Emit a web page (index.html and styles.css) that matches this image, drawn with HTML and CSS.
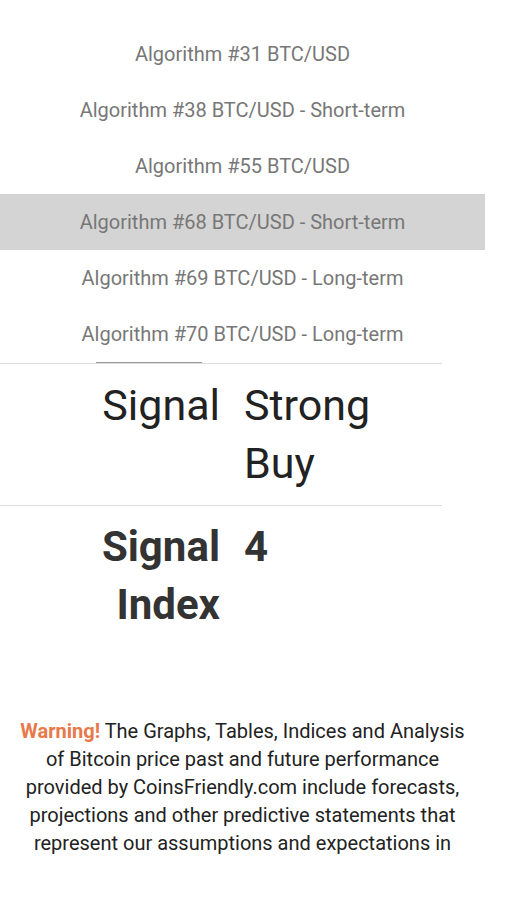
FILE: index.html
```html
<!DOCTYPE html>
<html lang="en">
<head>
    <meta charset="UTF-8">
    <meta name="viewport" content="width=device-width, initial-scale=1.0">
    <title>Signals</title>
    <link rel="stylesheet" href="styles.css">
</head>
<body>
    <div class="algo-list">
        <div class="algo-item">Algorithm #31 BTC/USD</div>
        <div class="algo-item">Algorithm #38 BTC/USD - Short-term</div>
        <div class="algo-item">Algorithm #55 BTC/USD</div>
        <div class="algo-item selected">Algorithm #68 BTC/USD - Short-term</div>
        <div class="algo-item">Algorithm #69 BTC/USD - Long-term</div>
        <div class="algo-item">Algorithm #70 BTC/USD - Long-term</div>
        <div class="scroll-thumb"></div>
    </div>

    <div class="signal-table">
        <div class="signal-row">
            <div class="signal-label">Signal</div>
            <div class="signal-value">Strong Buy</div>
        </div>
        <div class="signal-row bold">
            <div class="signal-label">Signal Index</div>
            <div class="signal-value">4</div>
        </div>
    </div>

    <p class="warning">
        <span class="warning-title">Warning!</span> The Graphs, Tables, Indices and Analysis of Bitcoin price past and future performance provided by CoinsFriendly.com include forecasts, projections and other predictive statements that represent our assumptions and expectations in
    </p>
</body>
</html>
```

FILE: styles.css
```css
body {
    margin: 0;
    font-family: Roboto, "Noto Sans", sans-serif;
    background-color: #fff;
}
.algo-list {
    position: relative;
    width: 485px;
    padding: 26px 0 1px;
}
.algo-item {
    height: 56px;
    line-height: 57px;
    text-align: center;
    font-size: 20px;
    color: #777;
}
.algo-item.selected {
    background-color: #d4d4d4;
}
.scroll-thumb {
    position: absolute;
    left: 96px;
    bottom: 0;
    width: 106px;
    height: 1px;
    background: #999;
}
.signal-table {
    width: 442px;
    border-top: 1px solid #ddd;
}
.signal-row {
    display: flex;
    gap: 24px;
    padding: 12px 0 13px;
    border-bottom: 1px solid #ddd;
    font-size: 43px;
    line-height: 58px;
    color: #222;
}
.signal-row.bold {
    padding-top: 12px;
    font-size: 42px;
    font-weight: bold;
    color: #333;
    border-bottom: none;
}
.signal-label {
    width: 220px;
    text-align: right;
}
.signal-value {
    width: 140px;
}
.warning {
    width: 455px;
    margin: 70px 0 0;
    padding: 0 15px;
    text-align: center;
    font-size: 20px;
    line-height: 28px;
    color: #222;
}
.warning-title {
    color: #e8794b;
    font-weight: bold;
}
```
